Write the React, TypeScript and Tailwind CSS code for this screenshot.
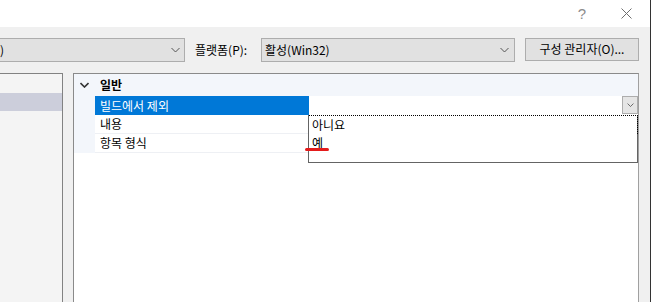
import React from 'react'

function Chevron({ className = '' }: { className?: string }) {
  return (
    <svg width="9" height="6" viewBox="0 0 9 6" className={className}>
      <path d="M0.5 1 L4.5 5 L8.5 1" fill="none" stroke="currentColor" strokeWidth="1" />
    </svg>
  )
}

function TitleBar() {
  return (
    <div className="h-[27px] shrink-0 bg-white flex items-center justify-end">
      <span className="text-[15px] leading-[16px] text-[#8c8c8c] mr-[35px] font-['Liberation_Sans',sans-serif]">?</span>
      <svg width="11" height="11" viewBox="0 0 11 11" className="mr-[18px] text-[#6e6e6e]">
        <path d="M0.5 0.5 L10.5 10.5 M10.5 0.5 L0.5 10.5" stroke="currentColor" strokeWidth="1" />
      </svg>
    </div>
  )
}

function Toolbar() {
  return (
    <div className="h-[24px] mt-[11px] shrink-0 flex items-center">
      <div className="-ml-px w-[186px] h-[24px] border border-[#adadad] bg-[#e1e1e1] flex items-center justify-between pr-[4px]">
        <span>)</span>
        <Chevron className="text-[#555]" />
      </div>
      <span className="ml-[10px] w-[66px]">플랫폼(P):</span>
      <div className="w-[254px] h-[24px] border border-[#adadad] bg-[#e1e1e1] flex items-center justify-between pl-[3px] pr-[5px]">
        <span>활성(Win32)</span>
        <Chevron className="text-[#555]" />
      </div>
      <button className="ml-[10px] w-[114px] h-[23px] -mt-[2px] border border-[#adadad] bg-[#e1e1e1] flex items-center justify-center">
        구성 관리자(O)...
      </button>
    </div>
  )
}

const rows = [
  { label: '빌드에서 제외', selected: true },
  { label: '내용', selected: false },
  { label: '항목 형식', selected: false },
]

function PropertyGrid() {
  return (
    <div className="relative ml-[10px] w-[566px] border border-[#8a8a8a] border-r-[#a0a0a0] border-b-0 bg-white">
      <div className="h-[22px] bg-[#f3f6fb] flex items-center">
        <svg width="9" height="6" viewBox="0 0 9 6" className="ml-[6px] text-[#333]">
          <path d="M0.5 1 L4.5 5 L8.5 1" fill="none" stroke="currentColor" strokeWidth="1.6" />
        </svg>
        <span className="ml-[11px] font-bold">일반</span>
      </div>
      {rows.map((row) => (
        <div key={row.label} className="flex h-[19px]">
          <div className="w-[21px] bg-[#f3f6fb]" />
          <div
            className={
              row.selected
                ? 'w-[214px] pl-[5px] bg-[#0078d7] text-white flex items-center'
                : 'w-[214px] pl-[5px] border-b border-[#eef0f4] flex items-center'
            }
          >
            {row.label}
          </div>
          <div className="flex-1 flex justify-end">
            {row.selected && (
              <div className="w-[16px] h-[18px] border border-[#adadad] bg-[#e5e5e5] flex items-center justify-center">
                <Chevron className="text-[#444] scale-75" />
              </div>
            )}
          </div>
        </div>
      ))}

      <div className="absolute left-[234px] top-[41px] w-[330px] h-[48px] border border-[#646464] border-t-0 bg-white">
        <div className="h-[19px] -mr-px border-t border-r border-dotted border-black flex items-center pl-[3px]">아니요</div>
        <div className="h-[18px] flex items-center pl-[3px]">예</div>
      </div>
      <div className="absolute left-[231px] top-[74px] w-[24px] h-[3px] rounded-full bg-[#e41b1b]" />
    </div>
  )
}

export default function App() {
  return (
    <div className="w-[651px] h-[302px] overflow-hidden bg-[#f0f0f0] border-r border-[#333] flex flex-col text-[12px] leading-[16px] text-black font-['Noto_Sans_CJK_KR','Noto_Sans',sans-serif]">
      <TitleBar />
      <Toolbar />
      <div className="flex flex-1 mt-[11px] min-h-0">
        <div className="-ml-px w-[64px] border border-[#828282] border-b-0 bg-[#f4f4f4] pt-[19px]">
          <div className="h-[18px] bg-[#cccedb]" />
        </div>
        <PropertyGrid />
      </div>
    </div>
  )
}
